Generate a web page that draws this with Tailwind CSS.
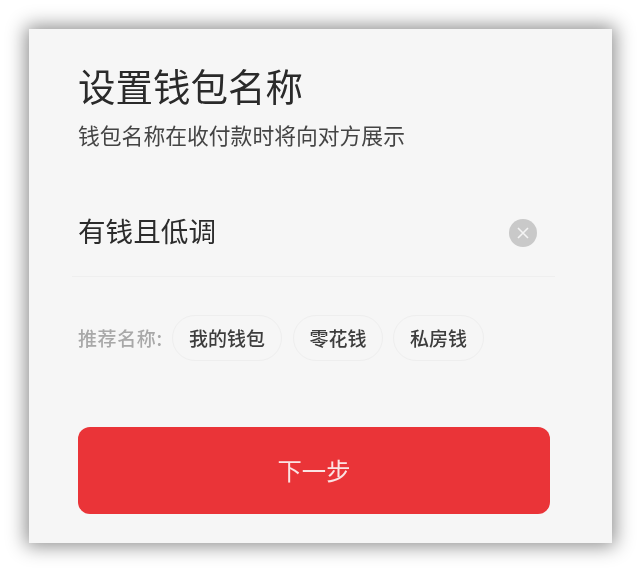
<!DOCTYPE html>
<html lang="zh">
<head>
    <meta charset="UTF-8">
    <title>设置钱包名称</title>
    <script src="https://cdn.jsdelivr.net/npm/@tailwindcss/browser@4"></script>
</head>
<body class="bg-white w-[641px] h-[572px] overflow-hidden font-['Noto_Sans_CJK_SC',sans-serif]">
    <div class="pt-[29px] pl-[29px]">
        <!-- Card -->
        <div class="w-[583px] h-[514px] bg-[#f6f6f6] pt-[31px] shadow-[0_0_18px_3px_rgba(0,0,0,0.45)] blur-[0.4px]">
            <h1 class="pl-[49px] h-[50px] text-[37.5px] leading-[50px] text-[#2a2a2a] whitespace-nowrap">设置钱包名称</h1>
            <p class="pl-[49px] mt-[9px] h-[32px] text-[21.8px] leading-[32px] text-[#444444] whitespace-nowrap">钱包名称在收付款时将向对方展示</p>

            <!-- Name input -->
            <div class="ml-[43px] w-[483px] h-[126px] pt-[59px] pl-[6px] flex items-start border-b border-[#efefef]">
                <span class="text-[27.6px] leading-[40px] text-[#2c2c2c] whitespace-nowrap">有钱且低调</span>
                <span class="ml-auto mr-[18px] mt-[9px] w-[28px] h-[28px] rounded-full bg-[#c9c9c9] flex items-center justify-center">
                    <svg width="14" height="14" viewBox="0 0 14 14" fill="none" stroke="#f4f4f4" stroke-width="1.6">
                        <path d="M2 2 12 12M12 2 2 12"/>
                    </svg>
                </span>
            </div>

            <!-- Suggested names -->
            <div class="ml-[49px] mt-[38px] h-[46px] flex items-center">
                <span class="w-[94px] text-[19px] font-medium tracking-[0.6px] text-[#a8a8a8] whitespace-nowrap">推荐名称:</span>
                <span class="w-[110px] h-[46px] rounded-full border border-[#eeeeee] flex items-center justify-center text-[19px] font-medium text-[#3d3d3d] whitespace-nowrap">我的钱包</span>
                <span class="ml-[11px] w-[90px] h-[46px] rounded-full border border-[#eeeeee] flex items-center justify-center text-[19px] font-medium text-[#3d3d3d] whitespace-nowrap">零花钱</span>
                <span class="ml-[10px] w-[91px] h-[46px] rounded-full border border-[#eeeeee] flex items-center justify-center text-[19px] font-medium text-[#3d3d3d] whitespace-nowrap">私房钱</span>
            </div>

            <button class="ml-[49px] mt-[66px] w-[472px] h-[87px] rounded-[12px] bg-[#ea3438] text-[24.3px] text-[#fbe3e3] flex items-center justify-center">下一步</button>
        </div>
    </div>
</body>
</html>
